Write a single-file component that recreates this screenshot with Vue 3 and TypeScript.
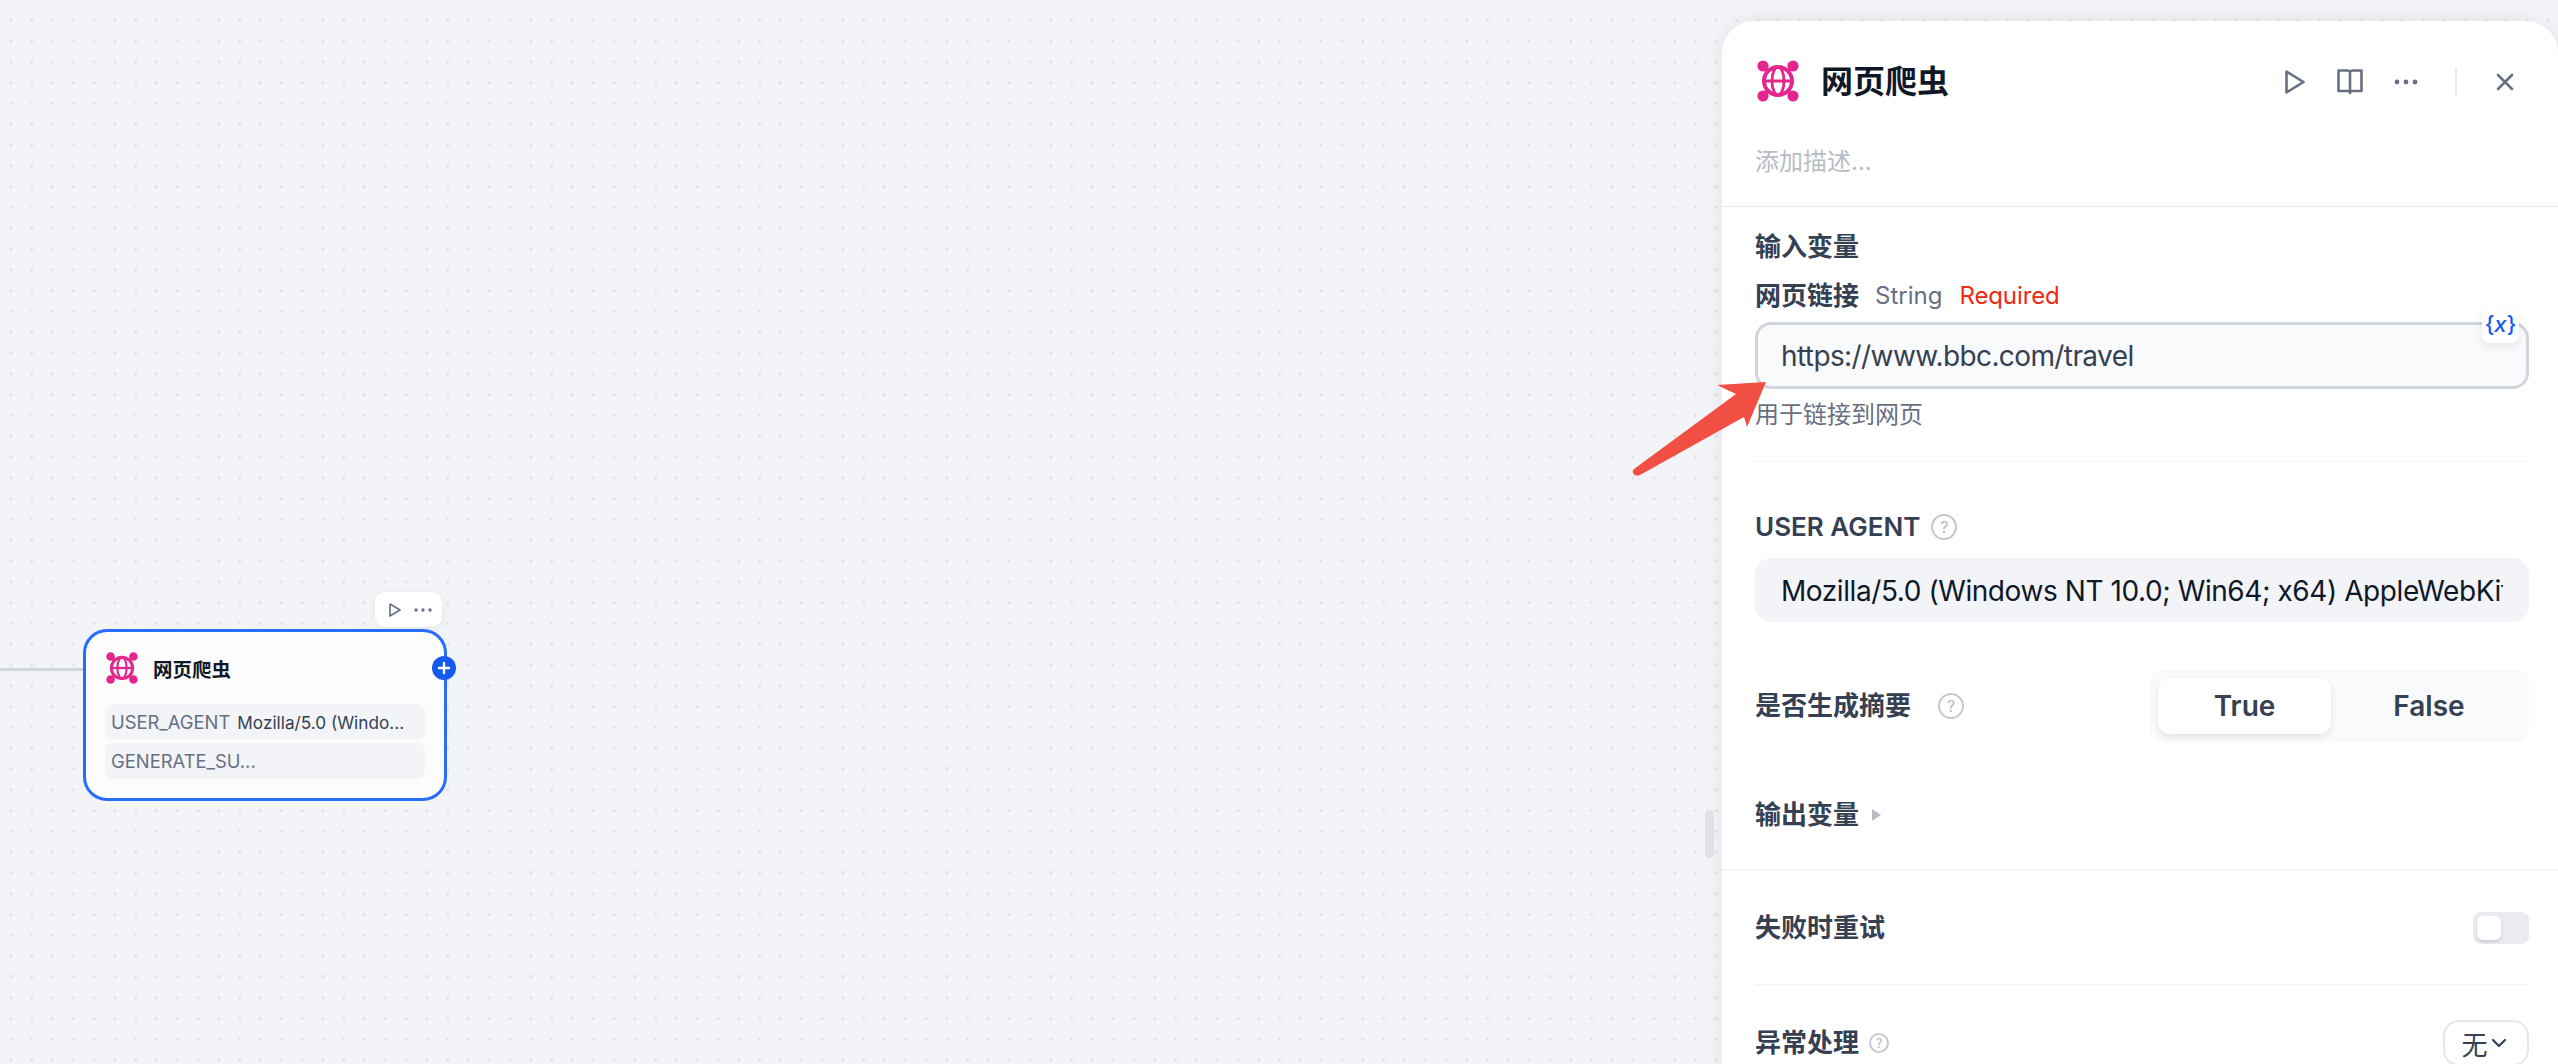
<script setup lang="ts">
const nodeRows = [
  { key: "USER_AGENT", value: "Mozilla/5.0 (Windo..." },
  { key: "GENERATE_SU...", value: "" },
];
</script>

<template>
  <div class="page">
    <main class="canvas">
      <div class="edge"></div>

      <div class="node-tools">
        <svg width="14" height="16" viewBox="0 0 14 16" fill="none" stroke="#676f83" stroke-width="1.6" stroke-linejoin="round">
          <path d="M2 2L12 8L2 14Z" />
        </svg>
        <svg width="18" height="4" viewBox="0 0 18 4" fill="#676f83">
          <circle cx="2" cy="2" r="1.7" />
          <circle cx="9" cy="2" r="1.7" />
          <circle cx="16" cy="2" r="1.7" />
        </svg>
      </div>

      <div class="node">
        <div class="node-head">
          <svg class="logo-sm" viewBox="0 0 42 42" fill="none" stroke="#e3278f">
            <g fill="#e3278f" stroke="none">
              <circle cx="6" cy="6" r="5.6" />
              <circle cx="36" cy="6" r="5.6" />
              <circle cx="6" cy="36" r="5.6" />
              <circle cx="36" cy="36" r="5.6" />
            </g>
            <path d="M6 6L36 36M36 6L6 36" stroke-width="4" />
            <circle cx="21" cy="21" r="14" fill="#fcfcfd" stroke-width="4" />
            <ellipse cx="21" cy="21" rx="6" ry="14" stroke-width="2.8" />
            <path d="M7 21H35" stroke-width="3" />
          </svg>
          <span class="node-title">网页爬虫</span>
        </div>
        <div v-for="row in nodeRows" :key="row.key" class="node-row">
          <span class="node-key">{{ row.key }}</span>
          <span v-if="row.value" class="node-value">{{ row.value }}</span>
        </div>
        <span class="node-plus">
          <svg width="14" height="14" viewBox="0 0 14 14" stroke="#fff" stroke-width="2.4" stroke-linecap="round">
            <path d="M7 2V12M2 7H12" />
          </svg>
        </span>
      </div>

      <div class="resize-handle"></div>
    </main>

    <aside class="panel">
      <header class="panel-head">
        <div class="title-row">
          <svg class="logo" viewBox="0 0 42 42" fill="none" stroke="#e3278f">
            <g fill="#e3278f" stroke="none">
              <circle cx="6" cy="6" r="5.6" />
              <circle cx="36" cy="6" r="5.6" />
              <circle cx="6" cy="36" r="5.6" />
              <circle cx="36" cy="36" r="5.6" />
            </g>
            <path d="M6 6L36 36M36 6L6 36" stroke-width="4" />
            <circle cx="21" cy="21" r="14" fill="#fff" stroke-width="4" />
            <ellipse cx="21" cy="21" rx="6" ry="14" stroke-width="2.8" />
            <path d="M7 21H35" stroke-width="3" />
          </svg>
          <h1 class="title">网页爬虫</h1>
          <div class="head-actions">
            <svg class="act-play" width="20" height="24" viewBox="0 0 20 24" fill="none" stroke="#676f83" stroke-width="2.6" stroke-linejoin="round">
              <path d="M1.5 1.5L18.5 12L1.5 22.5Z" />
            </svg>
            <svg class="act-book" width="26" height="26" viewBox="0 0 26 26" fill="none" stroke="#676f83" stroke-width="2.6" stroke-linejoin="round">
              <path d="M13 4Q13 1.5 10 1.5H1.5V22H13M13 4Q13 1.5 16 1.5H24.5V22H13M13 4V25" />
            </svg>
            <svg class="act-more" width="24" height="6" viewBox="0 0 24 6" fill="#676f83">
              <circle cx="3" cy="3" r="2.4" />
              <circle cx="12" cy="3" r="2.4" />
              <circle cx="21" cy="3" r="2.4" />
            </svg>
            <span class="act-divider"></span>
            <svg class="act-close" width="18" height="18" viewBox="0 0 18 18" stroke="#676f83" stroke-width="2.6" stroke-linecap="round">
              <path d="M2 2L16 16M16 2L2 16" />
            </svg>
          </div>
        </div>
        <div class="desc">添加描述...</div>
      </header>

      <section class="inputs">
        <div class="group-label">输入变量</div>
        <div class="field-label">
          <b>网页链接</b>
          <span class="type">String</span>
          <span class="req">Required</span>
        </div>
        <div class="url-input">
          https://www.bbc.com/travel
          <span class="var-badge">{<i>x</i>}</span>
        </div>
        <div class="hint">用于链接到网页</div>
      </section>

      <section class="agent">
        <div class="group-label with-help">
          USER AGENT
          <span class="help">?</span>
        </div>
        <div class="agent-input">
          <span>Mozilla/5.0 (Windows NT 10.0; Win64; x64) AppleWebKit/537.36 (KHTML, like Gecko)</span>
        </div>
        <div class="summary-row">
          <div class="group-label with-help wide">
            是否生成摘要
            <span class="help">?</span>
          </div>
          <div class="segment">
            <span class="seg-on">True</span>
            <span class="seg-off">False</span>
          </div>
        </div>
        <div class="group-label outputs">
          输出变量
          <i class="caret"></i>
        </div>
      </section>

      <section class="retry-wrap">
        <div class="retry">
          <div class="group-label">失败时重试</div>
          <span class="toggle"><i></i></span>
        </div>
        <div class="error-row">
          <div class="group-label with-help small">
            异常处理
            <span class="help">?</span>
          </div>
          <div class="select">
            无
            <svg width="16" height="10" viewBox="0 0 16 10" fill="none" stroke="#354052" stroke-width="2.2" stroke-linecap="round" stroke-linejoin="round">
              <path d="M2 2L8 8L14 2" />
            </svg>
          </div>
        </div>
      </section>
    </aside>

    <svg class="arrow" width="140" height="105" viewBox="0 0 140 105">
      <path d="M134 5L115 50L112 40L8 98Q3 100 1 96Q0 94 2 92L104 17L85 8Z" fill="#f14f44" />
    </svg>
  </div>
</template>

<style>
html,
body {
  margin: 0;
  background: #f2f4f7;
}
</style>

<style scoped>
.page {
  position: relative;
  display: flex;
  width: 2558px;
  height: 1064px;
  overflow: hidden;
  font-family: Inter, "Noto Sans CJK SC", sans-serif;
  background-color: #f2f4f7;
  background-image: radial-gradient(circle, #e0e2e7 1px, transparent 2px);
  background-size: 20.8px 20.8px;
  background-position: 0.6px 10px;
}

.canvas {
  position: relative;
  flex: 1;
}

.arrow {
  position: absolute;
  left: 1632px;
  top: 377px;
}

.edge {
  position: absolute;
  left: 0;
  top: 668px;
  width: 84px;
  height: 3px;
  background: #d0d5dc;
}

.node-tools {
  position: absolute;
  left: 375px;
  top: 592px;
  width: 67px;
  height: 35px;
  display: flex;
  align-items: center;
  gap: 12px;
  padding-left: 13px;
  box-sizing: border-box;
  background: #fff;
  border-radius: 10px;
  box-shadow: 0 2px 8px rgba(16, 24, 40, 0.06);
}

.node {
  position: absolute;
  left: 83px;
  top: 629px;
  width: 364px;
  height: 172px;
  box-sizing: border-box;
  border: 3px solid #296dff;
  border-radius: 24px;
  background: #fcfcfd;
  padding: 20px 19px 0;
}

.node-head {
  display: flex;
  align-items: center;
  gap: 15px;
  margin-bottom: 20px;
}

.logo-sm {
  width: 32px;
  height: 32px;
  margin-left: 1px;
  flex: none;
}

.node-title {
  font-size: 19.5px;
  font-weight: 700;
  color: #101828;
}

.node-row {
  display: flex;
  align-items: center;
  gap: 7px;
  height: 36px;
  margin-bottom: 3px;
  padding: 0 6px;
  border-radius: 8px;
  background: #f2f4f7;
  font-size: 17.2px;
  white-space: nowrap;
}

.node-key {
  font-size: 18.4px;
  color: #676f83;
}

.node-value {
  color: #354052;
}

.node-plus {
  position: absolute;
  right: -12px;
  top: 24px;
  width: 24px;
  height: 24px;
  display: flex;
  align-items: center;
  justify-content: center;
  border-radius: 50%;
  background: #155aef;
}

.resize-handle {
  position: absolute;
  left: 1705px;
  top: 810px;
  width: 9px;
  height: 48px;
  border-radius: 5px;
  background: #dde0e6;
}

.panel {
  flex: none;
  width: 836px;
  height: 1043px;
  margin-top: 21px;
  overflow: hidden;
  background: #fff;
  border-radius: 32px 32px 0 0;
  box-shadow: 0 0 20px rgba(16, 24, 40, 0.08);
  color: #354052;
}

.panel-head {
  padding: 38px 29px 26px 33px;
  border-bottom: 1px solid #e4e7ec;
}

.title-row {
  display: flex;
  align-items: center;
}

.logo {
  width: 42px;
  height: 42px;
  margin-left: 2px;
  flex: none;
}

.title {
  margin: 2px 0 0 22px;
  font-size: 32px;
  line-height: 42px;
  font-weight: 700;
  color: #101828;
}

.head-actions {
  margin-left: auto;
  margin-top: 2px;
  display: flex;
  align-items: center;
}

.act-more {
  margin-left: 31px;
}

.act-book {
  margin-left: 32px;
}

.act-divider {
  width: 2px;
  height: 28px;
  margin: 0 39px 0 37px;
  background: #eaecf0;
}

.act-close {
  margin-right: 15px;
}

.desc {
  margin-top: 41px;
  font-size: 24px;
  line-height: 36px;
  color: #b8bcc4;
}

.inputs {
  padding: 22px 29px 0 33px;
}

.group-label {
  font-size: 26px;
  line-height: 36px;
  font-weight: 600;
  color: #354052;
}

.field-label {
  display: flex;
  align-items: center;
  margin-top: 13px;
  font-size: 24px;
  line-height: 36px;
}

.field-label b {
  font-size: 26px;
  font-weight: 600;
}

.type {
  margin-left: 16px;
  color: #676f83;
}

.req {
  margin-left: 17px;
  letter-spacing: -0.1px;
  color: #f0280f;
}

.url-input {
  position: relative;
  height: 67px;
  margin-top: 8px;
  box-sizing: border-box;
  padding-left: 23px;
  line-height: 63px;
  font-size: 28px;
  letter-spacing: -0.6px;
  color: #354052;
  background: #f9fafb;
  border: 3px solid #d0d5dd;
  border-radius: 16px;
}

.var-badge {
  position: absolute;
  right: 7px;
  top: -19px;
  width: 37px;
  height: 37px;
  display: flex;
  align-items: center;
  justify-content: center;
  font-size: 22px;
  font-weight: 500;
  letter-spacing: 0;
  color: #155aef;
  background: #fff;
  border-radius: 8px;
  box-shadow: 0 4px 10px rgba(16, 24, 40, 0.08);
}

.hint {
  margin-top: 8px;
  padding-bottom: 28px;
  font-size: 24px;
  line-height: 36px;
  color: #676f83;
  border-bottom: 1px solid #f2f4f7;
}

.agent {
  padding: 47px 29px 36px 33px;
  border-bottom: 2px solid #f2f4f7;
}

.with-help {
  display: flex;
  align-items: center;
  gap: 11px;
}

.wide {
  gap: 27px;
}

.small {
  gap: 10px;
}

.help {
  width: 22px;
  height: 22px;
  display: flex;
  align-items: center;
  justify-content: center;
  border: 2.4px solid #c4c8cf;
  border-radius: 50%;
  font-size: 16px;
  font-weight: 400;
  color: #b4b8c0;
}

.small .help {
  width: 16px;
  height: 16px;
  font-size: 13px;
  border-width: 2px;
}

.agent-input {
  height: 64px;
  margin-top: 13px;
  padding: 2px 26px 0;
  box-sizing: border-box;
  display: flex;
  align-items: center;
  font-size: 28px;
  letter-spacing: -0.42px;
  color: #101828;
  background: #f2f4f7;
  border-radius: 16px;
  white-space: nowrap;
}

.agent-input span {
  display: block;
  width: 100%;
  overflow: hidden;
}

.summary-row {
  display: flex;
  align-items: center;
  justify-content: space-between;
  margin-top: 48px;
}

.segment {
  display: flex;
  align-items: center;
  width: 379px;
  height: 72px;
  box-sizing: border-box;
  padding: 0 8px;
  background: #f9fafb;
  border-radius: 12px;
  font-size: 28px;
  font-weight: 600;
}

.seg-on {
  width: 173px;
  height: 56px;
  display: flex;
  align-items: center;
  justify-content: center;
  background: #fff;
  border-radius: 12px;
  box-shadow: 0 3px 6px rgba(16, 24, 40, 0.1);
}

.seg-off {
  flex: 1;
  padding-left: 6px;
  text-align: center;
}

.outputs {
  display: flex;
  align-items: center;
  gap: 13px;
  margin-top: 55px;
}

.caret {
  width: 0;
  height: 0;
  border-left: 9px solid #b8bcc4;
  border-top: 6px solid transparent;
  border-bottom: 6px solid transparent;
}

.retry-wrap {
  padding: 0 29px 0 33px;
}

.retry {
  height: 113px;
  display: flex;
  align-items: center;
  justify-content: space-between;
  border-bottom: 1px solid #f2f4f7;
}

.toggle {
  width: 56px;
  height: 32px;
  box-sizing: border-box;
  padding: 4px;
  background: #e9ebf0;
  border-radius: 8px;
}

.toggle i {
  display: block;
  width: 24px;
  height: 24px;
  background: #fff;
  border-radius: 6px;
  box-shadow: 0 2px 3px rgba(16, 24, 40, 0.15);
}

.error-row {
  display: flex;
  align-items: center;
  justify-content: space-between;
  margin-top: 35px;
}

.select {
  display: flex;
  align-items: center;
  justify-content: center;
  gap: 3px;
  width: 86px;
  height: 46px;
  box-sizing: border-box;
  padding-right: 4px;
  font-size: 26px;
  color: #354052;
  border: 2px solid #e4e7ec;
  border-radius: 16px;
}
</style>
